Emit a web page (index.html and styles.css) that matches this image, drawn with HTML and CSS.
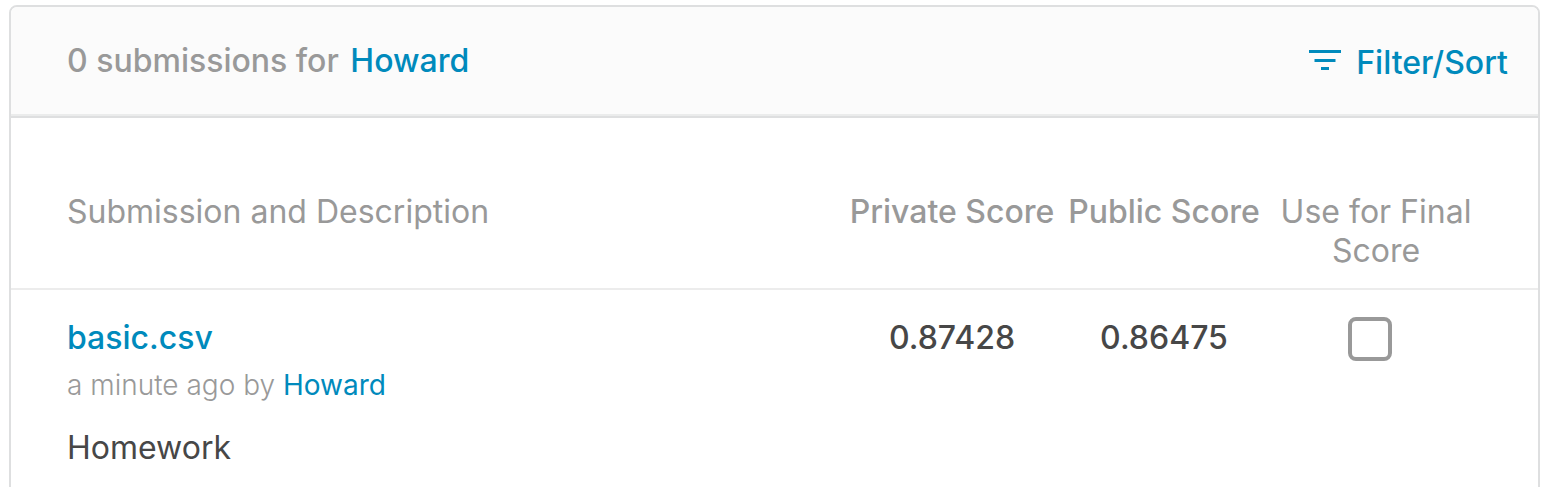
FILE: index.html
```html
<!DOCTYPE html>
<html lang="en">
<head>
<meta charset="utf-8">
<title>Submissions</title>
<link rel="stylesheet" href="styles.css">
</head>
<body>
<section class="panel">
  <header class="panel-header">
    <h1 class="panel-title">0 submissions for <a class="link title-user" href="#">Howard</a></h1>
    <button class="filter" type="button">
      <svg class="filter-icon" viewBox="0 0 32 25" aria-hidden="true"><path d="M0 1.5h32M5.5 10.5h21M12 18.5h8" fill="none" stroke="currentColor" stroke-width="3"/></svg>
      Filter/Sort
    </button>
  </header>
  <table class="submissions">
    <thead>
      <tr>
        <th class="col-main" scope="col">Submission and Description</th>
        <th class="col-private strong" scope="col">Private Score</th>
        <th class="col-public strong" scope="col">Public Score</th>
        <th class="col-final" scope="col" id="final-label">Use for Final Score</th>
      </tr>
    </thead>
    <tbody>
      <tr>
        <td class="col-main">
          <a class="link file" href="#">basic.csv</a>
          <p class="meta">a minute ago by <a class="link meta-user" href="#">Howard</a></p>
          <p class="description">Homework</p>
        </td>
        <td class="score">0.87428</td>
        <td class="score">0.86475</td>
        <td class="final"><input class="check" type="checkbox" aria-labelledby="final-label"></td>
      </tr>
    </tbody>
  </table>
</section>
</body>
</html>
```
FILE: styles.css
```css
* { box-sizing: border-box; }
body {
  margin: 0;
  padding: 5px 4px 0 9px;
  overflow: hidden;
  background: #fff;
  color: #474747;
  font-family: Inter, "Liberation Sans", sans-serif;
  font-size: 32px;
  line-height: 39px;
}
.panel {
  border: 2px solid #dedfe0;
  border-radius: 8px;
  overflow: hidden;
}
.panel-header {
  display: flex;
  align-items: center;
  justify-content: space-between;
  padding: 32px 30px 34px 56px;
  background: #fbfbfb;
  border-bottom: 2px solid #dedfe0;
  box-shadow: inset 0 -2px #ebecec;
}
.panel-title { margin: 0; font-size: 32px; font-weight: 450; color: #999; }
.link { color: #008abc; text-decoration: none; }
.title-user { margin-left: 3px; font-weight: 500; }
.filter {
  display: flex;
  align-items: center;
  gap: 15px;
  padding: 4px 0 0;
  border: 0;
  background: none;
  color: #008abc;
  font: inherit;
  font-weight: 500;
}
.filter-icon { width: 32px; height: 25px; }
.submissions { width: 100%; border-collapse: collapse; table-layout: fixed; }
th, td { padding: 0; vertical-align: top; }
th {
  padding: 74px 0 18px;
  border-bottom: 2px solid #ececec;
  color: #999;
  font-weight: 400;
}
th.strong { font-weight: 500; }
td { padding: 28px 0 40px; }
.submissions .col-main { padding-left: 56px; text-align: left; }
.col-private { width: 216px; }
.col-public { width: 208px; }
.col-final { width: 270px; }
th.col-final { padding-right: 54px; }
.score { text-align: center; font-weight: 500; }
.file { font-weight: 500; }
.meta { margin: 10px 0 25px; color: #999; font-size: 28px; line-height: 36px; font-weight: 300; }
.meta-user { font-weight: 400; }
.description { margin: 0; }
td.final { padding-top: 27px; padding-right: 66px; }
.check {
  appearance: none;
  display: block;
  width: 44px;
  height: 44px;
  margin: 0 auto;
  border: 4px solid #999;
  border-radius: 8px;
  background: #fff;
}
```
